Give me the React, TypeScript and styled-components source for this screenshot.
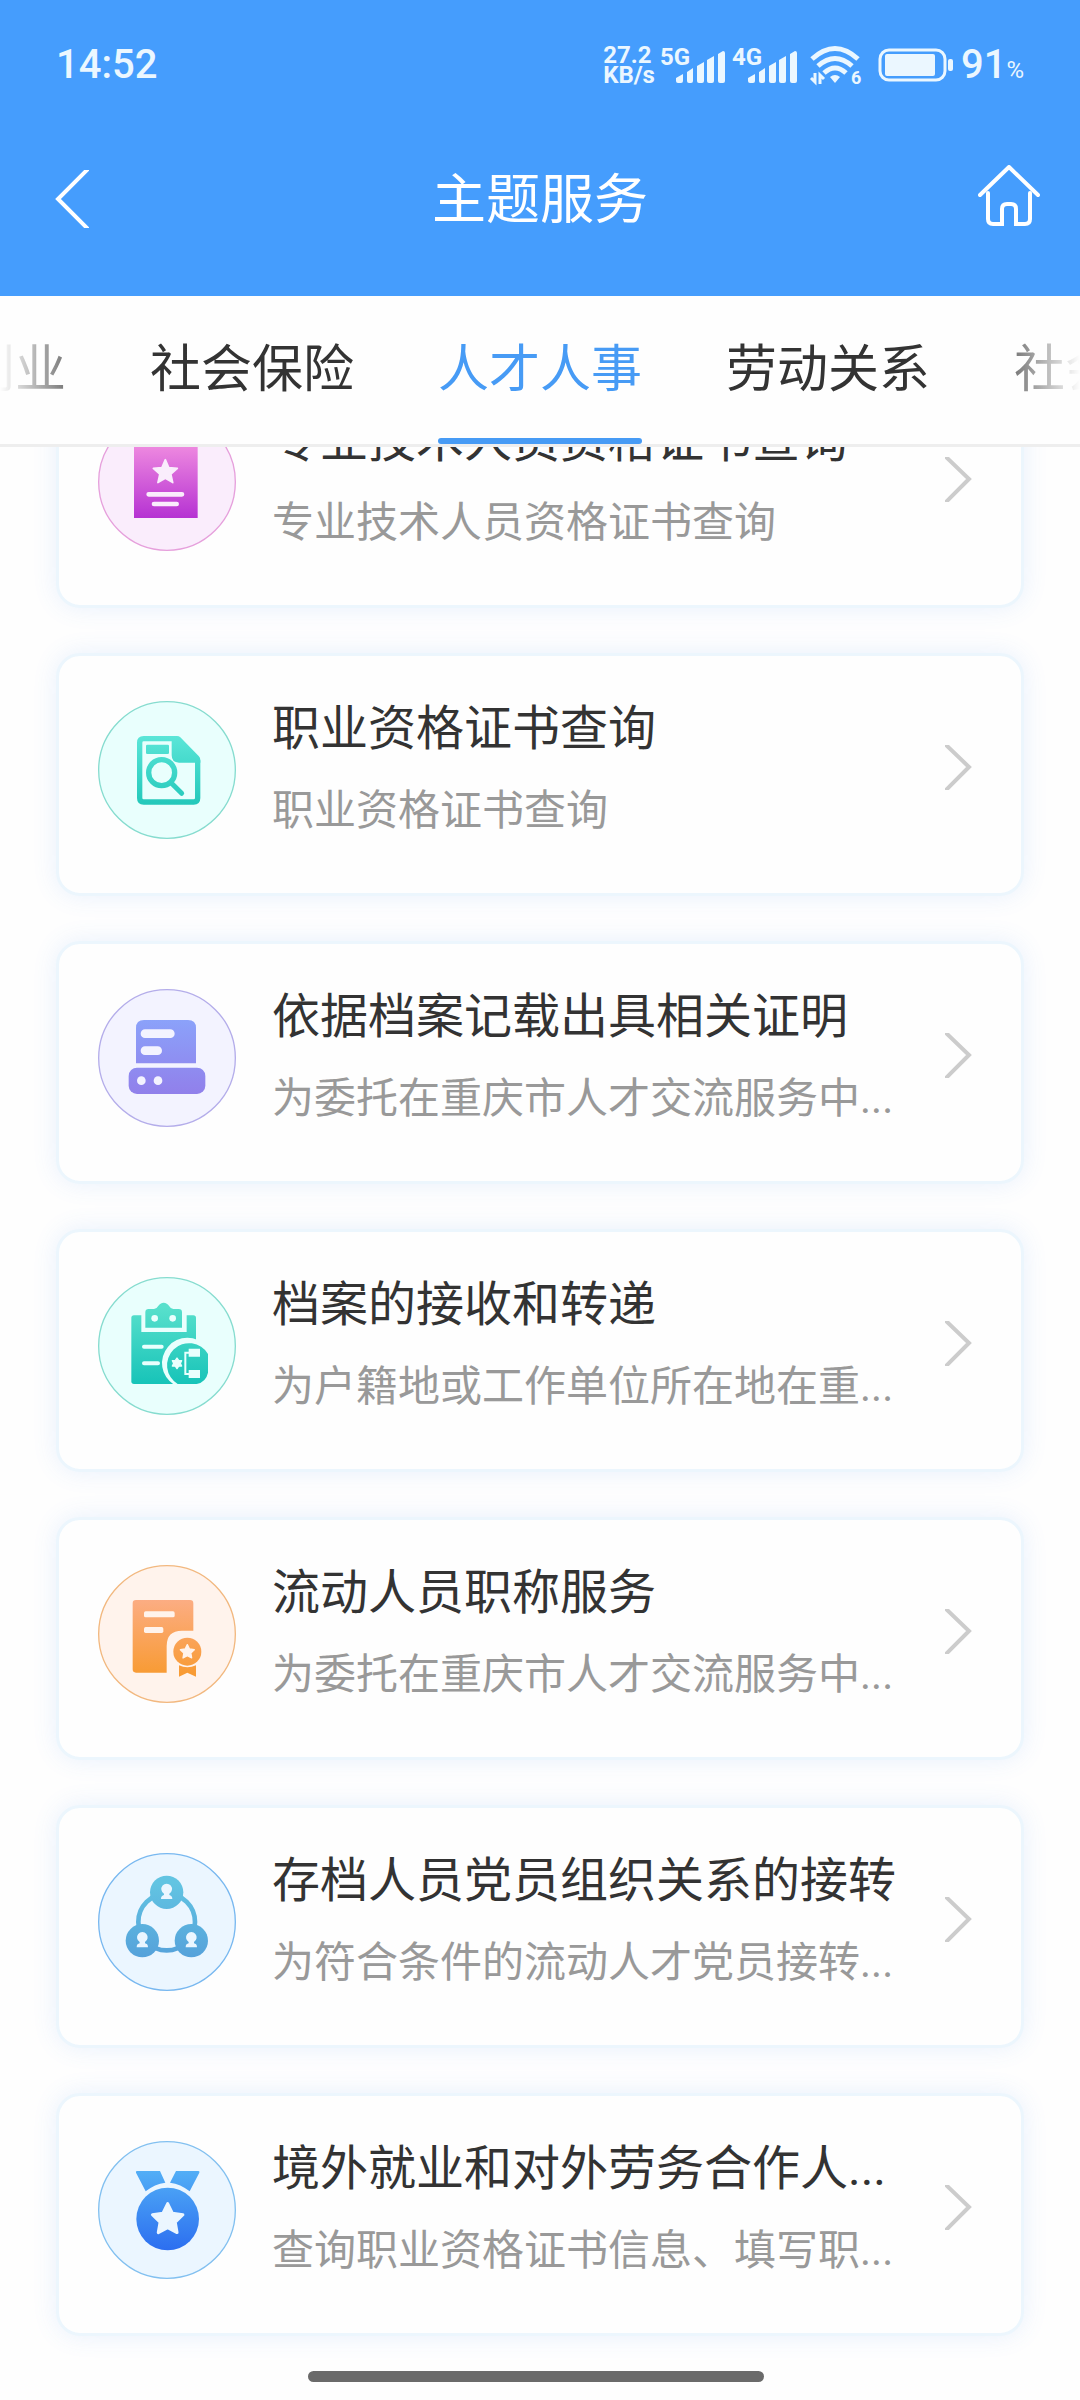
import React, { useLayoutEffect, useRef, useState } from "react";
import styled, { createGlobalStyle } from "styled-components";

const GlobalStyle = createGlobalStyle`
  *, *::before, *::after { box-sizing: border-box; }
  body {
    margin: 0;
    background: #fefefe;
    font-family: Roboto, "Noto Sans CJK SC", sans-serif;
  }
  button {
    padding: 0;
    border: 0;
    background: none;
    color: inherit;
    font: inherit;
    cursor: pointer;
  }
`;

const Screen = styled.div`
  display: flex;
  flex-direction: column;
  height: 100vh;
  overflow: hidden;
`;

const Header = styled.header`
  flex: none;
  padding-bottom: 28px;
  background: #459dfd;
  color: #fff;
`;

const StatusBar = styled.div`
  display: flex;
  align-items: center;
  justify-content: space-between;
  height: 130px;
  padding: 0 56px;
  color: #ebf7ff;
`;

const Clock = styled.time`
  font-size: 40px;
  font-weight: 500;
  line-height: 48px;
`;

const StatusGroup = styled.div`
  display: flex;
  align-items: center;
`;

const NetSpeed = styled.div`
  margin-right: 5px;
  font-size: 24px;
  font-weight: 700;
  line-height: 20px;
`;

const Signal = styled.div`
  display: grid;
  width: 65px;
  height: 36px;
  margin-right: 7px;

  > * { grid-area: 1 / 1; }
  > svg { place-self: end; }
`;

const SignalLabel = styled.span`
  font-size: 24px;
  font-weight: 700;
  line-height: 20px;
`;

const WifiIcon = styled.svg`
  margin: 0 16px 0 6px;
  overflow: visible;
`;

const Level = styled.div`
  display: flex;
  align-items: baseline;
  margin-left: 8px;
  font-size: 40px;
  font-weight: 500;
  line-height: 48px;
`;

const Percent = styled.small`
  font-size: 24px;
  font-weight: 400;
  line-height: 24px;
`;

const NavBar = styled.div`
  display: grid;
  grid-template-columns: 1fr auto 1fr;
  align-items: center;
  height: 138px;
  padding: 0 40px;
`;

const PageTitle = styled.h1`
  margin: 0;
  padding-top: 4px;
  font-size: 54px;
  font-weight: 400;
  line-height: 72px;
`;

const BackButton = styled.button`
  display: flex;
  justify-self: start;
  padding-left: 15px;
`;

const HomeButton = styled.button`
  display: flex;
  justify-self: end;
  padding-bottom: 6px;
`;

const TabStrip = styled.nav`
  flex: none;
  border-bottom: 3px solid #eee;
  background: #fefefe;
`;

const TabList = styled.div`
  display: flex;
  justify-content: center;
  gap: 84px;
  overflow: hidden;
  mask-image: linear-gradient(to right, transparent, #000 100px calc(100% - 100px), transparent);
`;

const Tab = styled.button<{ $active: boolean }>`
  flex: none;
  height: 148px;
  padding-top: 6px;

  && {
    color: ${(p) => (p.$active ? "#479bf5" : "#333")};
    font-size: 51px;
    line-height: 136px;
  }

  &::after {
    content: "";
    display: block;
    height: 6px;
    border-radius: 3px;
    background: ${(p) => (p.$active ? "#479bf5" : "transparent")};
  }
`;

const Content = styled.main`
  flex: 1;
  min-height: 0;
  overflow-y: auto;
  scrollbar-width: none;
`;

const ServiceList = styled.ul`
  display: flex;
  flex-direction: column;
  gap: 45px;
  margin: 0;
  padding: 45px 56px 64px;
  list-style: none;
`;

const Card = styled.a`
  display: flex;
  align-items: flex-start;
  gap: 36px;
  padding: 45px 48px 54px 39px;
  border: 3px solid #ecf6fd;
  border-radius: 24px;
  background: #fefefe;
  box-shadow: 0 0 24px rgba(70, 140, 240, 0.12);
  text-decoration: none;
`;

const Badge = styled.svg`
  flex: none;
  width: 138px;
  height: 138px;
`;

const CardBody = styled.div`
  display: flex;
  flex: 1;
  align-items: center;
  gap: 38px;
  min-width: 0;
`;

const CardText = styled.div`
  flex: 1;
  min-width: 0;
`;

const CardTitle = styled.h2`
  margin: 0 0 32px;
  overflow: hidden;
  color: #333;
  font-size: 48px;
  font-weight: 400;
  line-height: 56px;
  text-overflow: ellipsis;
  white-space: nowrap;
`;

const CardNote = styled.p`
  margin: 0;
  overflow: hidden;
  color: #999;
  font-size: 42px;
  line-height: 44px;
  text-overflow: ellipsis;
  white-space: nowrap;
`;

const Arrow = styled.svg`
  flex: none;
`;

const HomeIndicator = styled.div`
  position: fixed;
  bottom: 18px;
  left: 50%;
  width: 456px;
  height: 11px;
  margin-left: -232px;
  border-radius: 6px;
  background: #6a6a6a;
`;

const starPoints = (cx: number, cy: number, r: number, inner = 0.46, tips = 5) =>
  Array.from({ length: tips * 2 }, (_, i) => {
    const radius = i % 2 ? r * inner : r;
    const a = (Math.PI * i) / tips - Math.PI / 2;
    return `${(cx + radius * Math.cos(a)).toFixed(1)},${(cy + radius * Math.sin(a)).toFixed(1)}`;
  }).join(" ");

type Kind = "license" | "search" | "archive" | "transfer" | "rank" | "party" | "medal";

const palette: Record<Kind, { bg: string; line: string; from: string; to: string }> = {
  license: { bg: "#faedfc", line: "#e6a0dc", from: "#f08ce0", to: "#b32ed2" },
  search: { bg: "#e9fffd", line: "#86dccf", from: "#5fe8da", to: "#20c6b8" },
  archive: { bg: "#f3f3ff", line: "#b4adea", from: "#8ba2fa", to: "#917eea" },
  transfer: { bg: "#e9fffd", line: "#86dccf", from: "#58e0cc", to: "#16c3b8" },
  rank: { bg: "#fff3ec", line: "#f2b87f", from: "#fcae88", to: "#f89b34" },
  party: { bg: "#ebf6ff", line: "#78b8f0", from: "#62c4e2", to: "#55a0da" },
  medal: { bg: "#ebf6ff", line: "#82c0f0", from: "#52aef6", to: "#2c6ff0" },
};

const Person = ({ x, y, fill }: { x: number; y: number; fill: string }) => (
  <path
    transform={`translate(${x} ${y})`}
    fill={fill}
    d="M-8 4a16 16 0 1 1 16 0v4c5 1 9 4 9 12h-34c0-8 4-11 9-12z"
  />
);

function Glyph({ kind, fill, bg }: { kind: Kind; fill: string; bg: string }) {
  switch (kind) {
    case "license":
      return (
        <>
          <path fill={fill} d="M108 95h191v220H108z" />
          <polygon
            points={starPoints(202, 178, 38)}
            fill={bg}
            stroke={bg}
            strokeWidth="5"
            strokeLinejoin="round"
          />
          <path stroke={bg} strokeWidth="14" strokeLinecap="round" d="M152 244h100M168 273h68" />
        </>
      );
    case "search":
      return (
        <>
          <path
            fill="none"
            stroke={fill}
            strokeWidth="16"
            strokeLinejoin="round"
            d="M236 113H137q-12 0-12 12v166q0 12 12 12h150q12 0 12-12V178"
          />
          <path fill={fill} d="M221 105h16q6 0 10 4l55 56q5 5 5 12v8h-64q-22 0-22-22z" />
          <rect fill={fill} x="144" y="131" width="69" height="28" rx="4" />
          <circle cx="191" cy="215" r="39" fill="none" stroke={fill} strokeWidth="16" />
          <path fill="none" stroke={fill} strokeWidth="15" strokeLinecap="round" d="M220 246l31 31" />
        </>
      );
    case "archive":
      return (
        <>
          <path fill={fill} d="M114 223V117q0-24 24-24h132q24 0 24 24v106z" />
          <rect fill={fill} x="92" y="236" width="230" height="79" rx="25" />
          <path stroke={bg} strokeWidth="26" strokeLinecap="round" d="M141 134h76M141 185h38" />
          <circle cx="130" cy="275" r="13" fill={bg} />
          <circle cx="180" cy="275" r="13" fill={bg} />
        </>
      );
    case "transfer":
      return (
        <>
          <rect fill={fill} x="100" y="115" width="194" height="206" rx="8" />
          <path fill={bg} d="M130 100h136v65H130z" />
          <path
            fill={fill}
            d="M142 152v-46q0-10 10-10h16q8 0 12-8 7-11 17-11t17 11q4 8 12 8h16q10 0 10 10v46z"
          />
          <circle cx="170" cy="124" r="10" fill={bg} />
          <circle cx="224" cy="124" r="10" fill={bg} />
          <path stroke={bg} strokeWidth="12" strokeLinecap="round" d="M138 209h53M138 259h42" />
          <path fill={bg} d="M228 323a76 76 0 1 1 80 0z" />
          <path fill={fill} d="M239 321h57q28-6 34-34v-56a66 66 0 1 0-91 90z" />
          <polygon
            points={starPoints(237, 259, 16, 0.62, 6)}
            fill={bg}
            stroke={bg}
            strokeWidth="4"
            strokeLinejoin="round"
          />
          <path fill="none" stroke={bg} strokeWidth="6" d="M274 227h-12v64h12" />
          <path fill={bg} d="M272 215h34v24h-34zM272 279h34v24h-34z" />
        </>
      );
    case "rank":
      return (
        <>
          <path
            fill={fill}
            d="M114 105h162q10 0 10 10v82h-34q-46 0-46 46v80h-92q-10 0-10-10V115q0-10 10-10z"
          />
          <rect x="138" y="139" width="92" height="18" rx="5" fill={bg} />
          <rect x="138" y="186" width="58" height="18" rx="5" fill={bg} />
          <circle cx="268" cy="260" r="42" fill={fill} />
          <polygon
            points={starPoints(268, 261, 22, 0.5)}
            fill={bg}
            stroke={bg}
            strokeWidth="4"
            strokeLinejoin="round"
          />
          <path fill={fill} d="M243 301q25 12 51 0v34l-26-12-25 12z" />
        </>
      );
    case "party":
      return (
        <>
          <circle cx="206" cy="207" r="85" fill="none" stroke={fill} strokeWidth="14" />
          <circle cx="206" cy="118" r="50" fill={fill} />
          <circle cx="133" cy="263" r="50" fill={fill} />
          <circle cx="280" cy="263" r="50" fill={fill} />
          <Person x={206} y={118} fill={bg} />
          <Person x={133} y={263} fill={bg} />
          <Person x={280} y={263} fill={bg} />
        </>
      );
    case "medal":
      return (
        <>
          <path
            fill={fill}
            d="M117 90h69l16 35q-32 4-59 26l-29-56q-2-5 3-5zM234 90h67q5 0 3 5l-29 56q-27-22-59-26z"
          />
          <circle cx="209" cy="234" r="94" fill={fill} />
          <polygon
            points={starPoints(209, 236, 48, 0.5)}
            fill={bg}
            stroke={bg}
            strokeWidth="9"
            strokeLinejoin="round"
          />
        </>
      );
  }
}

function ServiceBadge({ kind }: { kind: Kind }) {
  const { bg, line, from, to } = palette[kind];
  const id = `tone-${kind}`;
  return (
    <Badge viewBox="0 0 414 414" aria-hidden="true">
      <defs>
        <linearGradient id={id} gradientUnits="userSpaceOnUse" x1="207" y1="90" x2="207" y2="325">
          <stop offset="0" stopColor={from} />
          <stop offset="1" stopColor={to} />
        </linearGradient>
      </defs>
      <circle cx="207" cy="207" r="205" fill={bg} stroke={line} strokeWidth="4" />
      <Glyph kind={kind} fill={`url(#${id})`} bg={bg} />
    </Badge>
  );
}

const SignalBars = () => (
  <svg width="49" height="32" viewBox="0 0 49 32" fill="currentColor" aria-hidden="true">
    <path d="M0 27l7-4v7q0 2-2 2H2q-2 0-2-2zM11 21l6-4v13q0 2-2 2h-2q-2 0-2-2zM21 15l7-4v19q0 2-2 2h-3q-2 0-2-2zM31 9l7-4v25q0 2-2 2h-3q-2 0-2-2zM42 3l5-3q2 0 2 2v28q0 2-2 2h-3q-2 0-2-2z" />
  </svg>
);

const services: { kind: Kind; title: string; note: string }[] = [
  { kind: "license", title: "专业技术人员资格证书查询", note: "专业技术人员资格证书查询" },
  { kind: "search", title: "职业资格证书查询", note: "职业资格证书查询" },
  { kind: "archive", title: "依据档案记载出具相关证明", note: "为委托在重庆市人才交流服务中..." },
  { kind: "transfer", title: "档案的接收和转递", note: "为户籍地或工作单位所在地在重..." },
  { kind: "rank", title: "流动人员职称服务", note: "为委托在重庆市人才交流服务中..." },
  { kind: "party", title: "存档人员党员组织关系的接转", note: "为符合条件的流动人才党员接转..." },
  { kind: "medal", title: "境外就业和对外劳务合作人...", note: "查询职业资格证书信息、填写职..." },
];

const tabs = ["就业创业", "社会保险", "人才人事", "劳动关系", "社会保障"];

export default function App() {
  const [active, setActive] = useState("人才人事");
  const content = useRef<HTMLElement>(null);

  // The list opens at its end, with the earlier entries scrolled under the tabs.
  useLayoutEffect(() => {
    const el = content.current;
    if (el) el.scrollTop = el.scrollHeight;
  }, []);

  return (
    <Screen>
      <GlobalStyle />
      <Header>
        <StatusBar>
          <Clock>14:52</Clock>
          <StatusGroup>
            <NetSpeed>
              27.2
              <br />
              KB/s
            </NetSpeed>
            <Signal>
              <SignalLabel>5G</SignalLabel>
              <SignalBars />
            </Signal>
            <Signal>
              <SignalLabel>4G</SignalLabel>
              <SignalBars />
            </Signal>
            <WifiIcon width="52" height="38" viewBox="0 0 52 38" fill="none" stroke="currentColor" aria-hidden="true">
              <path strokeWidth="5" d="M2 13q23-21 46 0M8 20q17-15 34 0M14 27q11-10 22 0" />
              <path fill="currentColor" stroke="none" d="M20 31q5-4 10 0l-5 6z" />
              <path strokeWidth="3" d="M5 27v9l-4-4M10 38v-9l4 4" />
              <text x="41" y="38" fill="currentColor" stroke="none" fontSize="18" fontWeight="700">
                6
              </text>
            </WifiIcon>
            <svg width="75" height="34" viewBox="0 0 75 34" aria-hidden="true">
              <rect x="2" y="2" width="65" height="30" rx="9" fill="none" stroke="currentColor" strokeWidth="3" />
              <rect x="7" y="6" width="50" height="22" rx="2" fill="currentColor" />
              <rect x="70" y="11" width="5" height="12" rx="2" fill="currentColor" />
            </svg>
            <Level>
              91<Percent>%</Percent>
            </Level>
          </StatusGroup>
        </StatusBar>
        <NavBar>
          <BackButton type="button" aria-label="返回">
            <svg width="34" height="58" viewBox="0 0 34 58" fill="none" stroke="#fff" strokeWidth="4" aria-hidden="true">
              <path d="M33 -1L3 29l30 30" />
            </svg>
          </BackButton>
          <PageTitle>主题服务</PageTitle>
          <HomeButton type="button" aria-label="首页">
            <svg
              width="62"
              height="62"
              viewBox="0 0 62 62"
              fill="none"
              stroke="#fff"
              strokeWidth="4"
              strokeLinecap="round"
              aria-hidden="true"
            >
              <path d="M2 30L31 2l29 28" strokeLinejoin="round" />
              <path d="M10 28v26q0 5 5 5h9V44q0-5 5-5h4q5 0 5 5v15h9q5 0 5-5V28" />
            </svg>
          </HomeButton>
        </NavBar>
      </Header>
      <TabStrip>
        <TabList>
          {tabs.map((t) => (
            <Tab key={t} type="button" $active={t === active} aria-pressed={t === active} onClick={() => setActive(t)}>
              {t}
            </Tab>
          ))}
        </TabList>
      </TabStrip>
      <Content ref={content}>
        <ServiceList>
          {services.map((s) => (
            <li key={s.kind}>
              <Card href={`#${s.kind}`}>
                <ServiceBadge kind={s.kind} />
                <CardBody>
                  <CardText>
                    <CardTitle>{s.title}</CardTitle>
                    <CardNote>{s.note}</CardNote>
                  </CardText>
                  <Arrow width="28" height="45" viewBox="0 0 28 45" fill="none" stroke="#ccc" strokeWidth="4" aria-hidden="true">
                    <path d="M-1 -2l25 24L-1 47" />
                  </Arrow>
                </CardBody>
              </Card>
            </li>
          ))}
        </ServiceList>
      </Content>
      <HomeIndicator />
    </Screen>
  );
}
